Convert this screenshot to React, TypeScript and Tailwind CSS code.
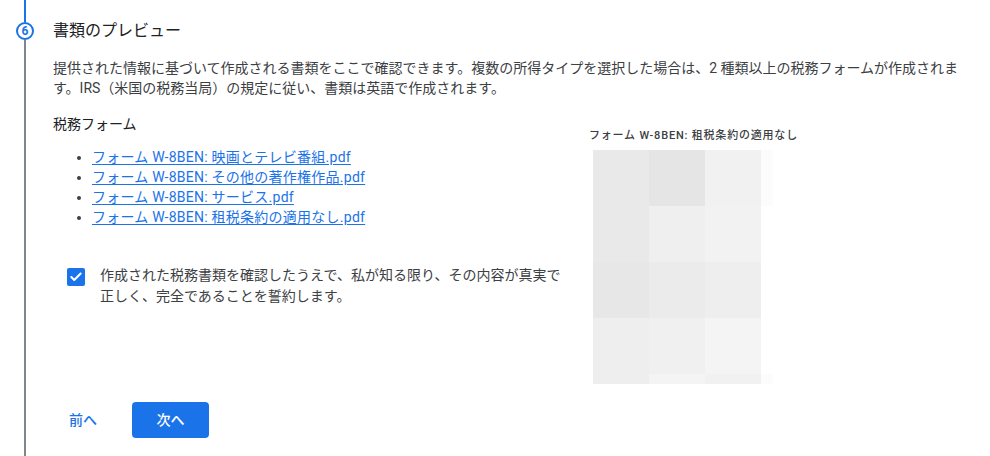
import { Check } from "lucide-react";

const forms = [
  "フォーム W-8BEN: 映画とテレビ番組.pdf",
  "フォーム W-8BEN: その他の著作権作品.pdf",
  "フォーム W-8BEN: サービス.pdf",
  "フォーム W-8BEN: 租税条約の適用なし.pdf",
];

// blurred thumbnail, read off the screenshot row by row
const cells = [
  "bg-[#e9e9e9]", "bg-[#e5e5e5]", "bg-[#f1f1f1]", "bg-[#fcfcfc]",
  "bg-[#e9e9e9]", "bg-[#efefef]", "bg-[#f2f2f2]", "bg-[#ffffff]",
  "bg-[#e7e7e7]", "bg-[#ebebeb]", "bg-[#eeeeee]", "bg-[#ffffff]",
  "bg-[#eeeeee]", "bg-[#f0f0f0]", "bg-[#f4f4f4]", "bg-[#ffffff]",
  "bg-[#eeeeee]", "bg-[#f4f4f4]", "bg-[#f1f1f1]", "bg-[#fcfcfc]",
];

export default function App() {
  return (
    <div
      className="flex h-[456px] w-[990px] overflow-hidden bg-white text-[#3c4043]"
      style={{ fontFamily: 'Roboto, "Noto Sans CJK JP", sans-serif' }}
    >
      <div className="flex w-[50px] shrink-0 flex-col items-center">
        <div className="h-[22px] w-[2px] bg-[#1a73e8]" />
        <div className="flex h-[18px] w-[18px] items-center justify-center rounded-full border-2 border-[#1a73e8] text-[12px] font-bold leading-none text-[#1a73e8]">
          6
        </div>
        <div className="w-[2px] flex-1 bg-[#80868b]" />
      </div>

      <div className="ml-[3px] flex flex-col pt-[19px]">
        <h2 className="text-[16px] leading-6 text-[#202124]">書類のプレビュー</h2>
        <p className="mt-[15px] w-[922px] text-[14px] leading-5">
          提供された情報に基づいて作成される書類をここで確認できます。複数の所得タイプを選択した場合は、2 種類以上の税務フォームが作成されます。IRS（米国の税務当局）の規定に従い、書類は英語で作成されます。
        </p>

        <div className="mt-4 flex">
          <div className="w-[536px]">
            <h3 className="text-[14px] leading-5 text-[#202124]">税務フォーム</h3>
            <ul className="mt-[13px] list-disc pl-[39px] text-[14px] leading-5 marker:text-[#3c4043]">
              {forms.map((f) => (
                <li key={f}>
                  <a href="#" className="tracking-[0.25px] text-[#1a73e8] underline underline-offset-2">
                    {f}
                  </a>
                </li>
              ))}
            </ul>

            <label className="mt-[38px] flex items-start gap-[15px] pl-[14px]">
              <span className="mt-[3px] flex h-[18px] w-[18px] shrink-0 items-center justify-center rounded-[2px] bg-[#1a73e8]">
                <Check className="h-[14px] w-[14px] text-white" strokeWidth={3.5} />
              </span>
              <span className="w-[470px] text-[14px] leading-[21px]">
                作成された税務書類を確認したうえで、私が知る限り、その内容が真実で正しく、完全であることを誓約します。
              </span>
            </label>
          </div>

          <div className="mt-[14px] flex flex-col">
            <p className="text-[11px] font-medium leading-4 tracking-[0.8px] text-[#3c4043]">
              フォーム W-8BEN: 租税条約の適用なし
            </p>
            <div className="ml-[4px] mt-[6px] grid grid-cols-[56px_56px_56px_12px] grid-rows-[56px_56px_56px_56px_10px]">
              {cells.map((c, i) => (
                <div key={i} className={c} />
              ))}
            </div>
          </div>
        </div>

        <div className="mt-[18px] flex items-center gap-[19px]">
          <button className="h-9 rounded px-4 text-[14px] font-medium text-[#1a73e8]">前へ</button>
          <button className="h-9 w-[77px] rounded bg-[#1a73e8] text-[14px] font-medium text-white">
            次へ
          </button>
        </div>
      </div>
    </div>
  );
}
